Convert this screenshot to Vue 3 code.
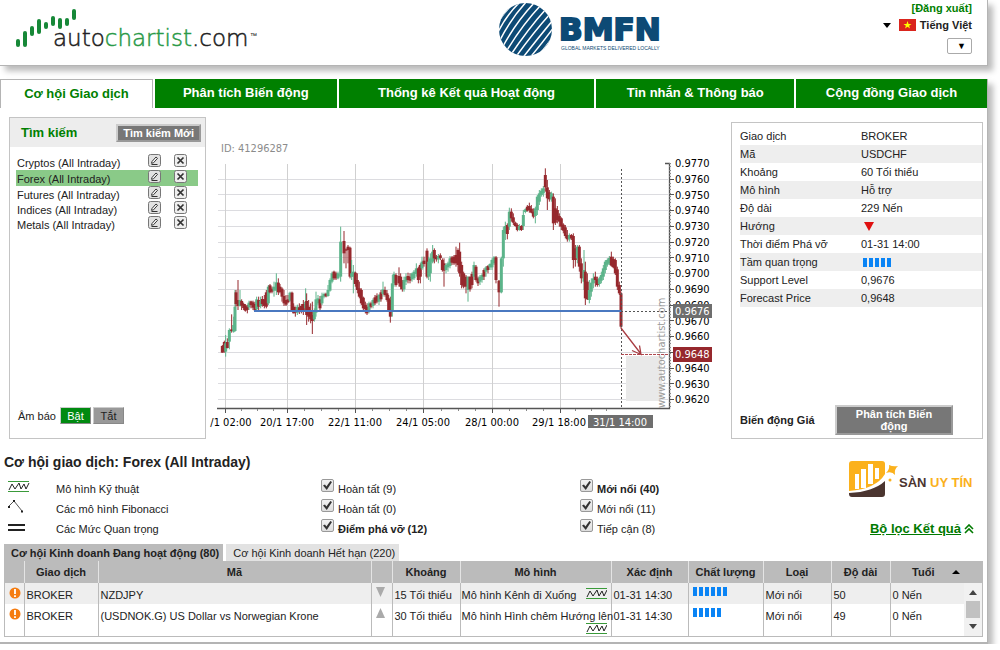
<script setup>
import { ref } from 'vue'

const navItems = [
  'Cơ hội Giao dịch',
  'Phân tích Biến động',
  'Thống kê Kết quả Hoạt động',
  'Tin nhắn & Thông báo',
  'Cộng đồng Giao dịch',
]

const searches = ['Cryptos', 'Forex', 'Futures', 'Indices', 'Metals']
const activeSearch = ref('Forex')

const details = [
  { label: 'Giao dịch', value: 'BROKER' },
  { label: 'Mã', value: 'USDCHF' },
  { label: 'Khoảng', value: '60 Tối thiểu' },
  { label: 'Mô hình', value: 'Hỗ trợ' },
  { label: 'Độ dài', value: '229 Nến' },
  { label: 'Hướng', down: true },
  { label: 'Thời điểm Phá vỡ', value: '01-31 14:00' },
  { label: 'Tầm quan trọng', bars: 5 },
  { label: 'Support Level', value: '0,9676' },
  { label: 'Forecast Price', value: '0,9648' },
]

const filters = [
  { kind: 'zigzag', name: 'Mô hình Kỹ thuật', a: 'Hoàn tất (9)', b: 'Mới nổi (40)', boldB: true },
  { kind: 'fib', name: 'Các mô hình Fibonacci', a: 'Hoàn tất (0)', b: 'Mới nổi (11)' },
  { kind: 'levels', name: 'Các Mức Quan trọng', a: 'Điểm phá vỡ (12)', boldA: true, b: 'Tiếp cận (8)' },
]

const rows = [
  { symbol: 'NZDJPY', dir: 'down', interval: '15 Tối thiểu', pattern: 'Mô hình Kênh đi Xuống', quality: 6, length: 50 },
  { symbol: '(USDNOK.G) US Dollar vs Norwegian Krone', dir: 'up', interval: '30 Tối thiểu', pattern: 'Mô hình Hình chêm Hướng lên', quality: 5, length: 49 },
]

const logoBars = [
  [18, 41, 45], [25, 33, 45], [32, 28, 34], [39, 21, 32], [46, 24, 27],
  [53, 18, 24], [60, 20, 27], [67, 20, 24], [74, 11, 18],
]

const prices = Array.from({ length: 16 }, (_, i) => ({
  text: (0.977 - i * 0.001).toFixed(4),
  y: 163 + i * 15.75,
})).filter((p) => p.text !== '0.9650')
const gridYs = Array.from({ length: 15 }, (_, i) => Math.round(178.5 + i * 15.75) + 0.5)
const minorYs = Array.from({ length: 75 }, (_, i) => Math.round(163 + i * 3.28) + 0.5)
const gridXs = [225.5, 287.5, 355.5, 423.5, 492.5, 560.5]
const minorXs = [241.5, 257.5, 273.5, 304.5, 321.5, 338.5, 372.5, 389.5, 406.5, 441.5, 458.5, 475.5, 509.5, 526.5, 543.5, 575.5, 591.5, 606.5]
const times = [
  [231, '/1 02:00'], [287, '20/1 17:00'], [355, '22/1 11:00'],
  [423, '24/1 05:00'], [492, '28/1 00:00'], [559, '29/1 18:00'],
]

// x, high, low, body top, body bottom, colour; three units to a pixel
const series = `52 645 668 648 668 r;58 632 668 636 665 r;62 615 680 640 665 g;67 625 655 636 654 r;73 595 658 600 635 g;80 553 608 598 603 r;86 560 608 585 605 g;90 480 605 530 603 g;93 480 530 487 522 r;99 450 540 510 528 r;105 480 530 510 528 g;110 508 540 513 527 r;116 518 540 522 534 r;121 522 545 526 542 r;127 524 550 530 540 r;132 512 540 518 532 g;138 512 535 514 525 r;144 512 540 517 533 r;150 515 543 522 541 r;155 500 540 508 538 g;161 500 545 510 530 r;167 500 535 512 528 g;172 498 530 507 522 r;178 495 535 508 528 r;184 480 535 487 530 r;190 465 525 470 520 g;195 462 490 466 487 r;201 470 490 476 485 r;207 455 500 470 482 g;214 430 495 457 482 g;220 445 495 458 487 r;225 462 490 470 486 r;231 472 515 476 500 r;237 480 528 498 520 r;243 495 528 510 524 r;249 495 520 508 517 r;255 485 515 488 512 g;261 485 545 488 540 r;266 520 550 530 550 r;271 530 560 540 548 r;277 524 555 530 548 g;283 520 552 532 545 r;289 522 550 528 545 r;295 510 555 522 545 r;302 475 548 515 535 g;305 490 585 513 555 r;311 510 575 530 560 r;317 520 580 545 568 r;322 515 612 555 573 r;328 535 575 540 568 g;333 485 560 508 548 g;339 495 525 505 520 g;345 498 540 508 535 r;351 488 525 497 520 g;357 488 505 492 500 g;363 488 502 491 499 r;369 465 500 480 498 g;375 445 485 450 482 g;381 425 460 430 455 g;387 422 450 425 445 r;393 425 450 430 445 r;399 425 448 430 445 g;407 290 455 335 440 g;417 303 400 333 370 r;423 355 415 358 362 r;429 345 400 350 360 r;435 350 445 353 440 r;440 390 450 430 440 g;445 405 490 425 440 g;451 425 470 428 462 r;457 430 490 450 480 r;463 455 505 475 500 r;469 475 525 480 520 r;475 500 545 503 535 r;481 515 550 525 538 r;486 520 555 530 550 r;492 515 550 520 542 g;498 515 535 520 530 r;504 505 535 510 528 g;510 495 525 502 520 r;516 490 520 497 515 r;522 492 525 495 515 g;528 480 515 487 508 r;534 455 500 478 492 g;540 470 500 480 495 r;546 480 515 490 510 r;551 495 540 505 540 r;556 500 578 510 560 r;562 435 560 460 545 g;567 425 470 432 460 g;573 430 470 435 465 r;582 412 470 438 460 r;587 430 478 440 470 r;592 450 485 455 478 r;597 440 485 450 478 g;603 430 465 440 455 g;609 428 460 438 450 r;615 430 460 440 452 r;621 428 455 430 448 g;627 420 450 425 445 g;634 400 440 415 432 g;640 410 460 415 450 r;646 400 460 405 440 r;651 380 420 395 415 g;657 380 410 392 402 r;666 355 445 362 440 r;671 380 450 395 440 g;676 370 455 385 430 g;683 345 400 365 395 g;688 355 400 360 385 r;694 375 395 380 388 r;700 372 400 378 388 g;706 370 390 376 384 r;712 385 425 390 420 r;717 385 470 400 422 r;723 400 430 405 420 g;729 395 425 400 412 g;735 378 415 385 408 g;741 378 405 382 398 r;747 375 405 380 400 r;753 350 410 375 400 r;759 355 425 360 405 r;764 338 440 365 430 r;770 395 475 405 465 r;776 425 475 430 470 r;783 435 490 440 470 r;789 440 515 440 480 g;795 440 485 440 478 r;801 425 475 432 465 r;807 395 450 405 440 g;813 405 455 410 450 r;819 440 468 445 460 r;825 435 465 440 455 g;831 430 458 435 450 g;837 415 450 420 440 r;843 408 440 412 425 g;849 405 430 408 420 r;855 400 420 402 412 g;861 385 420 390 412 g;867 378 405 382 400 g;873 378 460 382 450 r;882 450 530 452 487 r;889 380 490 385 487 g;895 290 410 300 385 g;901 275 330 288 310 g;907 280 328 285 312 r;913 233 300 245 290 g;919 235 275 245 265 r;925 250 285 262 278 r;931 275 290 278 288 r;937 280 304 285 300 r;943 282 302 288 300 g;949 285 303 288 300 r;955 240 300 255 288 g;961 235 250 238 246 g;967 225 245 230 242 r;973 218 248 228 240 r;979 225 250 236 248 r;985 235 265 245 260 r;991 230 280 235 258 g;997 195 255 200 240 g;1003 180 225 190 215 g;1009 175 200 182 195 g;1015 168 200 175 190 g;1021 115 185 135 172 r;1027 150 240 172 205 r;1033 180 215 187 208 r;1039 185 215 190 208 g;1045 190 300 200 280 r;1051 205 285 235 278 r;1057 228 280 240 270 r;1063 250 290 258 275 r;1069 262 300 265 290 r;1075 280 310 284 302 r;1081 285 325 292 318 r;1087 300 335 315 328 r;1093 310 335 315 328 g;1099 312 330 315 325 r;1105 310 415 318 390 r;1111 345 410 355 390 r;1117 345 400 350 385 g;1123 345 425 350 410 r;1129 385 460 400 445 r;1137 360 480 420 455 g;1141 395 525 425 505 r;1147 430 510 455 508 r;1153 450 520 480 510 g;1159 445 500 458 485 g;1165 430 475 445 460 g;1171 425 470 440 450 r;1177 440 470 448 465 r;1183 440 470 445 462 g;1189 425 460 435 452 g;1195 405 450 415 440 g;1201 390 430 395 420 g;1207 385 410 390 404 g;1213 378 405 384 400 g;1219 365 410 380 407 r;1225 380 415 387 412 r;1231 385 435 390 430 r;1237 410 480 418 470 r;1243 455 495 465 490 r;1248 485 595 490 590 r`
const candles = series.split(';').map((item) => {
  const [x, high, low, top, bottom, tone] = item.split(' ')
  return {
    x: 205 + x / 3,
    high: 130 + high / 3,
    low: 130 + low / 3,
    top: 130 + top / 3,
    height: (bottom - top) / 3,
    color: tone === 'g' ? '#5cb48a' : '#96282d',
  }
})
</script>

<template>
  <div class="page">
    <header class="header">
      <svg class="brand" viewBox="0 0 270 64" width="270" height="64" role="img" aria-label="autochartist.com">
        <line v-for="b in logoBars" :key="b[0]" :x1="b[0]" :x2="b[0]" :y1="b[1]" :y2="b[2]" stroke="#178838" stroke-width="4" stroke-linecap="round" />
        <text class="brand-text" x="53" y="46">auto<tspan class="brand-accent">chartist</tspan>.com</text>
        <text class="brand-tm" x="250" y="38">™</text>
      </svg>
      <svg class="partner" viewBox="498 0 167 60" width="167" height="60" role="img" aria-label="BMFN">
        <clipPath id="globe"><circle cx="525.5" cy="29.5" r="26.5" /></clipPath>
        <circle cx="525.5" cy="29.5" r="26.5" fill="#0d4a75" />
        <g clip-path="url(#globe)" fill="none" stroke="#fff" stroke-width="1.5">
          <path d="M497 24Q504 12 514 3M497 34Q507 14 521 1M499 42Q511 18 528 0M502 48Q516 22 535 2M506 52Q522 25 541 5M510 56Q528 29 546 9M515 58Q533 33 550 14M521 60Q538 38 553 20M528 60Q543 42 554 27M535 59Q547 46 554 35" />
        </g>
        <text class="partner-text" x="559" y="40">BMFN</text>
        <text class="partner-sub" x="561" y="50">GLOBAL MARKETS DELIVERED LOCALLY</text>
      </svg>
      <div class="account">
        <a href="#" class="logout">[Đăng xuất]</a>
        <button type="button" class="language">
          <svg width="8" height="5" viewBox="0 0 8 5"><path d="M0 0h8L4 5z" /></svg>
          <svg width="17" height="12" viewBox="0 0 17 12"><rect width="17" height="12" fill="#da251d" /><path d="M8.500 2l1 2.900h3l-2.400 1.800.9 2.900-2.500-1.800L6 9.600l.9-2.900-2.400-1.800h3z" fill="#ff0" /></svg>
          Tiếng Việt
        </button>
        <select class="picker" aria-label="Tài khoản"><option>▼</option></select>
      </div>
    </header>

    <main class="main">
      <nav class="nav">
        <a v-for="(item, i) in navItems" :key="item" href="#" :class="{ current: i === 0 }">{{ item }}</a>
      </nav>

      <div class="overview">
        <section class="search">
          <div class="search-head">
            <h2>Tìm kiếm</h2>
            <button type="button" class="bevel">Tìm kiếm Mới</button>
          </div>
          <ul class="search-list">
            <li v-for="s in searches" :key="s" :class="{ active: s === activeSearch }">
              <a href="#" @click.prevent="activeSearch = s">{{ s }} (All Intraday)</a>
              <button type="button" class="mini" :aria-label="'Sửa ' + s">
                <svg width="13" height="13" viewBox="0 0 13 13"><rect x=".5" y=".5" width="12" height="12" rx="2" fill="#e2e2e2" stroke="#777" /><path d="M4 7.500L8 3l1.500 1.300L5.500 8.800 3.500 9.300z" fill="#fff" stroke="#333" /><path d="M3.500 10.500h6" stroke="#333" /></svg>
              </button>
              <button type="button" class="mini" :aria-label="'Xóa ' + s">
                <svg width="13" height="13" viewBox="0 0 13 13"><rect x=".5" y=".5" width="12" height="12" rx="2" fill="#eee" stroke="#777" /><path d="M3.500 3.500l6 6M9.500 3.500l-6 6" stroke="#333" stroke-width="1.700" /></svg>
              </button>
            </li>
          </ul>
          <div class="sound">
            <span>Âm báo</span>
            <button type="button" class="on">Bật</button>
            <button type="button" class="off">Tắt</button>
          </div>
        </section>

        <svg class="chart" viewBox="206 117 525 322" role="img" aria-label="USDCHF">
          <text x="221" y="152" fill="#8b8b8b">ID: 41296287</text>
          <g stroke="#dcdce0">
            <line v-for="y in gridYs" :key="y" x1="218" x2="668" :y1="y" :y2="y" />
            <line v-for="x in gridXs" :key="x" :x1="x" :x2="x" y1="164" y2="408" stroke="#d0d0d0" />
          </g>
          <rect x="626" y="356" width="36" height="45" fill="#e9e9e9" />
          <text class="watermark" transform="translate(665 408) rotate(-90)">www.autochartist.com</text>
          <g v-for="(c, i) in candles" :key="i">
            <line :x1="c.x" :x2="c.x" :y1="c.high" :y2="c.low" :stroke="c.color" />
            <rect :x="c.x - 1.5" :y="c.top" width="3" :height="c.height" :fill="c.color" />
          </g>
          <line x1="254" x2="621" y1="311" y2="311" stroke="#4a78c0" stroke-width="2" />
          <path d="M621.500 169V408M621 311.500H670" fill="none" stroke="#555" stroke-dasharray="2 2" />
          <path d="M621 354.500H670" stroke="#b04a50" stroke-dasharray="3 1" />
          <path d="M621 328L641 354M632 350.500l9 4-1.500-9" fill="none" stroke="#a83c42" stroke-width="1.300" />
          <g stroke="#555">
            <path d="M217 408.500H669.500V163M665 163.500h5" fill="none" stroke-width="1.300" />
            <line v-for="y in minorYs" :key="y" x1="669" x2="671" :y1="y" :y2="y" stroke="#888" />
            <line v-for="y in gridYs" :key="y" x1="669" x2="674" :y1="y" :y2="y" />
            <line v-for="x in minorXs" :key="x" :x1="x" :x2="x" y1="409" y2="411" stroke="#888" />
            <line v-for="x in gridXs" :key="x" :x1="x" :x2="x" y1="409" y2="413" />
          </g>
          <text v-for="p in prices" :key="p.text" x="675" :y="p.y + 4">{{ p.text }}</text>
          <text v-for="t in times" :key="t[1]" :x="t[0]" y="426" text-anchor="middle">{{ t[1] }}</text>
          <rect x="673" y="304" width="39" height="14" fill="#6e6e6e" />
          <text x="675" y="315" fill="#fff">0.9676</text>
          <rect x="673" y="347" width="39" height="15" fill="#96282d" />
          <text x="675" y="358" fill="#fff">0.9648</text>
          <rect x="588" y="415" width="65" height="13" fill="#6e6e6e" />
          <text x="620" y="426" fill="#fff" text-anchor="middle">31/1 14:00</text>
        </svg>

        <section class="details">
          <dl>
            <div v-for="d in details" :key="d.label">
              <dt>{{ d.label }}</dt>
              <dd>
                <svg v-if="d.down" class="direction" width="10" height="9" viewBox="0 0 10 9"><path d="M0 0h10L5 9z" fill="#e01010" /></svg>
                <span v-else-if="d.bars" class="bars"><i v-for="n in d.bars" :key="n"></i></span>
                <template v-else>{{ d.value }}</template>
              </dd>
            </div>
          </dl>
          <div class="volatility">
            <strong>Biến động Giá</strong>
            <button type="button" class="bevel">Phân tích Biến động</button>
          </div>
        </section>
      </div>

      <section class="results">
        <h1>Cơ hội giao dịch: Forex (All Intraday)</h1>
        <div class="filter-row">
          <div class="filters">
            <template v-for="f in filters" :key="f.kind">
              <svg width="22" height="14" viewBox="0 0 22 14" fill="none" stroke="#222">
                <template v-if="f.kind === 'zigzag'">
                  <path d="M0 1.500h21M0 11.500h21" stroke="#3a9a3a" />
                  <path d="M1 10l3-6 3 5 4-6 2 6 3-5 2 5 3-6" />
                </template>
                <template v-else-if="f.kind === 'fib'">
                  <path d="M1 6L6 1l8 10" stroke="#555" />
                  <path d="M0 7h2M5 1h2M13 11.500h2" stroke-width="2" />
                </template>
                <path v-else d="M0 5h17M0 10h17" stroke-width="2" />
              </svg>
              <span>{{ f.name }}</span>
              <label :class="{ bold: f.boldA }"><input type="checkbox" checked />{{ f.a }}</label>
              <label :class="{ bold: f.boldB }"><input type="checkbox" checked />{{ f.b }}</label>
            </template>
          </div>
          <div class="side">
            <svg width="124" height="38" viewBox="848 460 124 38" role="img" aria-label="Sàn Uy Tín">
              <path d="M852 461h30q3 0 3 3v10q-9 15-36 17v-27q0-3 3-3z" fill="#fbb11c" />
              <path d="M849 493q24-1 36-12v13q0 3-3 3h-30q-3 0-3-3z" fill="#4b3530" />
              <path d="M855 474h4v15h-4zM861 469h5v19h-5zM868 464h5v20h-5zM875 468h4v11h-4z" fill="#fff" />
              <path d="M889 465q4 2 9 1-4 3-3 9-3-4-9-2 4-4 3-8z" fill="#fbb11c" />
              <circle cx="890" cy="480" r="1.500" fill="#fbb11c" />
              <text class="seal" x="899" y="487">SÀN <tspan fill="#fbb11c">UY TÍN</tspan></text>
            </svg>
            <a href="#" class="refine"><span>Bộ lọc Kết quả</span>
              <svg width="10" height="10" viewBox="0 0 10 10" fill="none" stroke="#007a00" stroke-width="1.600"><path d="M1 5l4-4 4 4M1 9l4-4 4 4" /></svg>
            </a>
          </div>
        </div>

        <div class="tabs">
          <button type="button" class="tab selected">Cơ hội Kinh doanh Đang hoạt động (80)</button>
          <button type="button" class="tab">Cơ hội Kinh doanh Hết hạn (220)</button>
        </div>
        <div class="table-wrap">
          <table>
            <colgroup>
              <col class="w19" /><col class="w74" /><col /><col class="w21" /><col class="w68" /><col class="w151" />
              <col class="w77" /><col class="w75" /><col class="w68" /><col class="w59" /><col class="w92" />
            </colgroup>
            <thead>
              <tr>
                <th></th><th>Giao dịch</th><th>Mã</th><th></th><th>Khoảng</th><th>Mô hình</th>
                <th>Xác định</th><th>Chất lượng</th><th>Loại</th><th>Độ dài</th>
                <th><span class="sorted">Tuổi <svg width="8" height="4" viewBox="0 0 8 4"><path d="M0 4h8L4 0z" /></svg></span></th>
              </tr>
            </thead>
            <tbody>
              <tr v-for="r in rows" :key="r.symbol">
                <td class="mark"><svg width="12" height="12" viewBox="0 0 12 12"><circle cx="6" cy="6" r="5.500" fill="#f57c10" /><path d="M6 2v5M6 8.200v1.800" stroke="#fff" stroke-width="1.800" /></svg></td>
                <td>BROKER</td>
                <td>{{ r.symbol }}</td>
                <td class="mark"><svg width="9" height="10" viewBox="0 0 9 10"><path :d="r.dir === 'down' ? 'M0 0h9L4.500 10z' : 'M0 10h9L4.500 0z'" fill="#aaa" /></svg></td>
                <td>{{ r.interval }}</td>
                <td class="pattern">
                  <div>
                    <span>{{ r.pattern }}</span>
                    <svg width="21" height="12" viewBox="0 0 21 12" fill="none" stroke="#222"><path d="M0 .5h21M0 10.500h21" stroke="#3a9a3a" /><path d="M1 9l3-6 3 5 4-6 2 6 3-5 2 5 3-6" /></svg>
                  </div>
                </td>
                <td>01-31 14:30</td>
                <td class="mark"><span class="bars"><i v-for="n in r.quality" :key="n"></i></span></td>
                <td>Mới nổi</td>
                <td>{{ r.length }}</td>
                <td>0 Nến</td>
              </tr>
            </tbody>
          </table>
          <div class="scrollbar" aria-hidden="true">
            <svg width="8" height="5" viewBox="0 0 8 5" fill="#444"><path d="M0 5h8L4 0z" /></svg>
            <span></span>
            <svg width="8" height="5" viewBox="0 0 8 5" fill="#444"><path d="M0 0h8L4 5z" /></svg>
          </div>
        </div>
      </section>
    </main>
  </div>
</template>

<style>
body {
  background: #fff;
}
</style>

<style scoped>
.page {
  padding-right: 12px;
  font-family: "Liberation Sans", Arial, sans-serif;
  font-size: 11px;
  line-height: 14px;
  color: #222;
}
.page * {
  box-sizing: border-box;
}
button,
select,
input {
  font: inherit;
  margin: 0;
}
h1,
h2,
ul,
dl,
dd {
  margin: 0;
  padding: 0;
}
svg {
  display: block;
  flex: none;
}
.header {
  display: grid;
  grid-template-columns: 499fr 167px 322fr;
  height: 66px;
  border: solid #b4b4b4;
  border-width: 0 1px 1px 0;
  box-shadow: 5px 5px 6px #bbb;
}
.brand-text {
  font: 200 23px "DejaVu Sans", sans-serif;
  fill: #222;
  stroke: #222;
  stroke-width: 0.5px;
}
.brand-accent {
  fill: #2a9a48;
  stroke: #2a9a48;
}
.brand-tm {
  font-size: 7px;
}
.partner-text {
  font: bold 32px "DejaVu Sans", sans-serif;
  font-size: 31px;
  fill: #0d4a75;
  stroke: #0d4a75;
  stroke-width: 2px;
}
.partner-sub {
  font-size: 5px;
  fill: #0d4a75;
}
.account {
  display: flex;
  flex-direction: column;
  align-items: flex-end;
  gap: 3px;
  padding: 1px 15px 0 0;
}
.logout {
  color: #008000;
  font-weight: bold;
  text-decoration: none;
}
.language {
  display: flex;
  align-items: center;
  gap: 4px;
  padding: 0;
  border: 0;
  background: none;
  color: #222;
  font-weight: bold;
}
.language svg:first-child {
  margin-right: 4px;
}
.picker {
  appearance: none;
  width: 25px;
  height: 16px;
  margin-top: 3px;
  padding: 0 0 0 9px;
  border: 1px solid #aaa;
  border-radius: 2px;
  background: #fff;
  font-size: 9px;
  line-height: 12px;
}
.main {
  margin-top: 13px;
  border: solid #b4b4b4;
  border-width: 0 1px 2px 0;
  box-shadow: 5px 5px 6px #bbb;
}
.nav {
  display: grid;
  grid-template-columns: 153fr 182fr 256fr 198fr 191fr;
  gap: 2px;
}
.nav a {
  height: 29px;
  background: #008000;
  color: #fff;
  font-size: 13px;
  font-weight: bold;
  line-height: 28px;
  text-align: center;
  text-decoration: none;
}
.nav .current {
  border: 1px solid #b4b4b4;
  border-bottom: 0;
  background: #fff;
  color: #008000;
  line-height: 27px;
}
.overview {
  display: grid;
  grid-template-columns: 197px 1fr 252px;
  padding: 9px 4px 0 9px;
}
.search,
.details {
  display: flex;
  flex-direction: column;
  border: 1px solid #c4c4c4;
  background: #fff;
}
.search-head {
  display: flex;
  align-items: center;
  justify-content: space-between;
  height: 29px;
  padding: 0 4px 0 11px;
  background: #ededed;
}
h2 {
  color: #008000;
  font-size: 13px;
}
.bevel {
  border: 2px solid;
  border-color: #ccc #999 #999 #ccc;
  background: #777;
  color: #fff;
  font-weight: bold;
  line-height: 12px;
}
.search-head .bevel {
  height: 18px;
  padding: 0 5px;
}
.search-list {
  padding: 7px 7px 0 6px;
  list-style: none;
}
.search-list li {
  display: grid;
  grid-template-columns: 1fr 26px 24px;
  height: 16px;
}
.search-list li:nth-child(n + 3) {
  height: 15px;
}
.search-list .active {
  background: #8aca88;
}
.search-list a {
  padding: 2px 0 0 1px;
  color: #222;
  text-decoration: none;
}
.mini {
  width: 13px;
  height: 13px;
  padding: 0;
  border: 0;
  background: none;
}
.sound {
  display: flex;
  align-items: center;
  gap: 2px;
  margin-top: auto;
  padding: 0 8px 14px;
}
.sound span {
  flex: 0 0 40px;
}
.sound button {
  width: 31px;
  height: 17px;
  padding: 0;
  border: 1px solid;
  border-color: #ccc #888 #888 #ccc;
  line-height: 12px;
}
.sound .on {
  background: #008a10;
  color: #fff;
}
.sound .off {
  background: #999;
  color: #222;
}
.chart {
  width: 100%;
}
.chart text {
  font: 11px "DejaVu Sans Condensed", "DejaVu Sans", sans-serif;
  font-stretch: condensed;
}
.chart .watermark {
  fill: #999;
}
.details {
  margin-top: 5px;
  padding: 4px 0 3px 8px;
}
.details dl > div {
  display: grid;
  grid-template-columns: 121px 1fr;
  height: 18px;
  line-height: 18px;
}
.details dl > div:nth-child(even) {
  background: #eee;
}
.direction {
  margin: 5px 0 0 3px;
}
.bars {
  display: flex;
  gap: 2px;
}
.bars i {
  width: 4px;
  height: 9px;
  background: #0a84f5;
}
dd .bars {
  padding: 5px 0 0 2px;
}
.volatility {
  display: grid;
  grid-template-columns: 95px 118px;
  align-items: center;
  margin-top: auto;
}
.volatility .bevel {
  height: 30px;
  padding: 0 12px;
}
.results {
  padding: 13px 4px 5px;
}
h1 {
  font-size: 14px;
  line-height: 20px;
}
.filter-row {
  display: flex;
  justify-content: space-between;
  padding: 5px 9px 0 4px;
}
.filters {
  display: grid;
  grid-template-columns: 48px 265px 259px auto;
  grid-auto-rows: 20px;
  padding-top: 2px;
}
.filters > svg {
  margin-top: 1px;
}
.filters > span {
  padding-top: 3px;
}
.filters label {
  display: flex;
  gap: 4px;
  padding-top: 3px;
}
.filters input {
  position: relative;
  appearance: none;
  flex: none;
  width: 13px;
  height: 13px;
  margin-top: -3px;
  border: 1px solid #999;
  border-radius: 2px;
  background: linear-gradient(#f2f2f2, #ddd);
}
.filters input:checked::before {
  content: "";
  position: absolute;
  inset: 1px;
  background: #333;
  clip-path: polygon(0 50%, 22% 38%, 38% 62%, 82% 0, 100% 12%, 42% 100%);
}
.bold {
  font-weight: bold;
}
.side {
  display: flex;
  flex-direction: column;
  align-items: flex-end;
  justify-content: space-between;
  margin-top: -17px;
}
.side > svg {
  margin-right: 2px;
}
.seal {
  font: bold 13px "Liberation Sans", sans-serif;
  fill: #4b3530;
}
.refine {
  display: flex;
  align-items: center;
  gap: 3px;
  padding-bottom: 3px;
  color: #007a00;
  font-size: 13px;
  font-weight: bold;
  text-decoration: none;
}
.refine span {
  text-decoration: underline;
}
.tabs {
  display: flex;
  gap: 3px;
  margin-top: 5px;
}
.tab {
  height: 17px;
  padding: 0 4px 0 7px;
  border: 0;
  background: #e2e2e2;
  color: #222;
}
.selected {
  background: #bbb;
  font-weight: bold;
}
.table-wrap {
  position: relative;
  border: solid #bbb;
  border-width: 0 1px 1px;
}
table {
  width: 100%;
  border-collapse: collapse;
  table-layout: fixed;
}
th {
  height: 22px;
  padding: 0;
  border-right: 1px solid #e4e4e4;
  background: #bbb;
}
td {
  padding: 5px 0 0 2px;
  border-right: 1px solid #bbb;
  vertical-align: top;
}
th:last-child,
td:last-child {
  border-right: 0;
}
tbody tr {
  height: 21px;
}
tbody tr:last-child {
  height: 32px;
}
tbody tr:nth-child(odd) {
  background: #eee;
}
.sorted {
  display: flex;
  align-items: center;
  justify-content: center;
  gap: 18px;
}
td.mark {
  padding: 4px 0 0 4px;
}
td.pattern {
  height: 21px;
  padding-left: 1px;
}
.pattern div {
  display: flex;
  flex-wrap: wrap;
  justify-content: space-between;
  max-height: 26px;
}
.pattern span {
  white-space: nowrap;
}
.pattern svg {
  margin: 0 4px 0 auto;
}
.w19 { width: 19px; }
.w21 { width: 21px; }
.w59 { width: 59px; }
.w68 { width: 68px; }
.w74 { width: 74px; }
.w75 { width: 75px; }
.w77 { width: 77px; }
.w92 { width: 92px; }
.w151 { width: 151px; }
.scrollbar {
  position: absolute;
  top: 22px;
  right: 0;
  bottom: 0;
  display: flex;
  flex-direction: column;
  align-items: center;
  justify-content: space-between;
  width: 18px;
  padding: 7px 0;
  background: #f1f1f1;
}
.scrollbar span {
  width: 14px;
  height: 17px;
  background: #c1c1c1;
}
</style>
